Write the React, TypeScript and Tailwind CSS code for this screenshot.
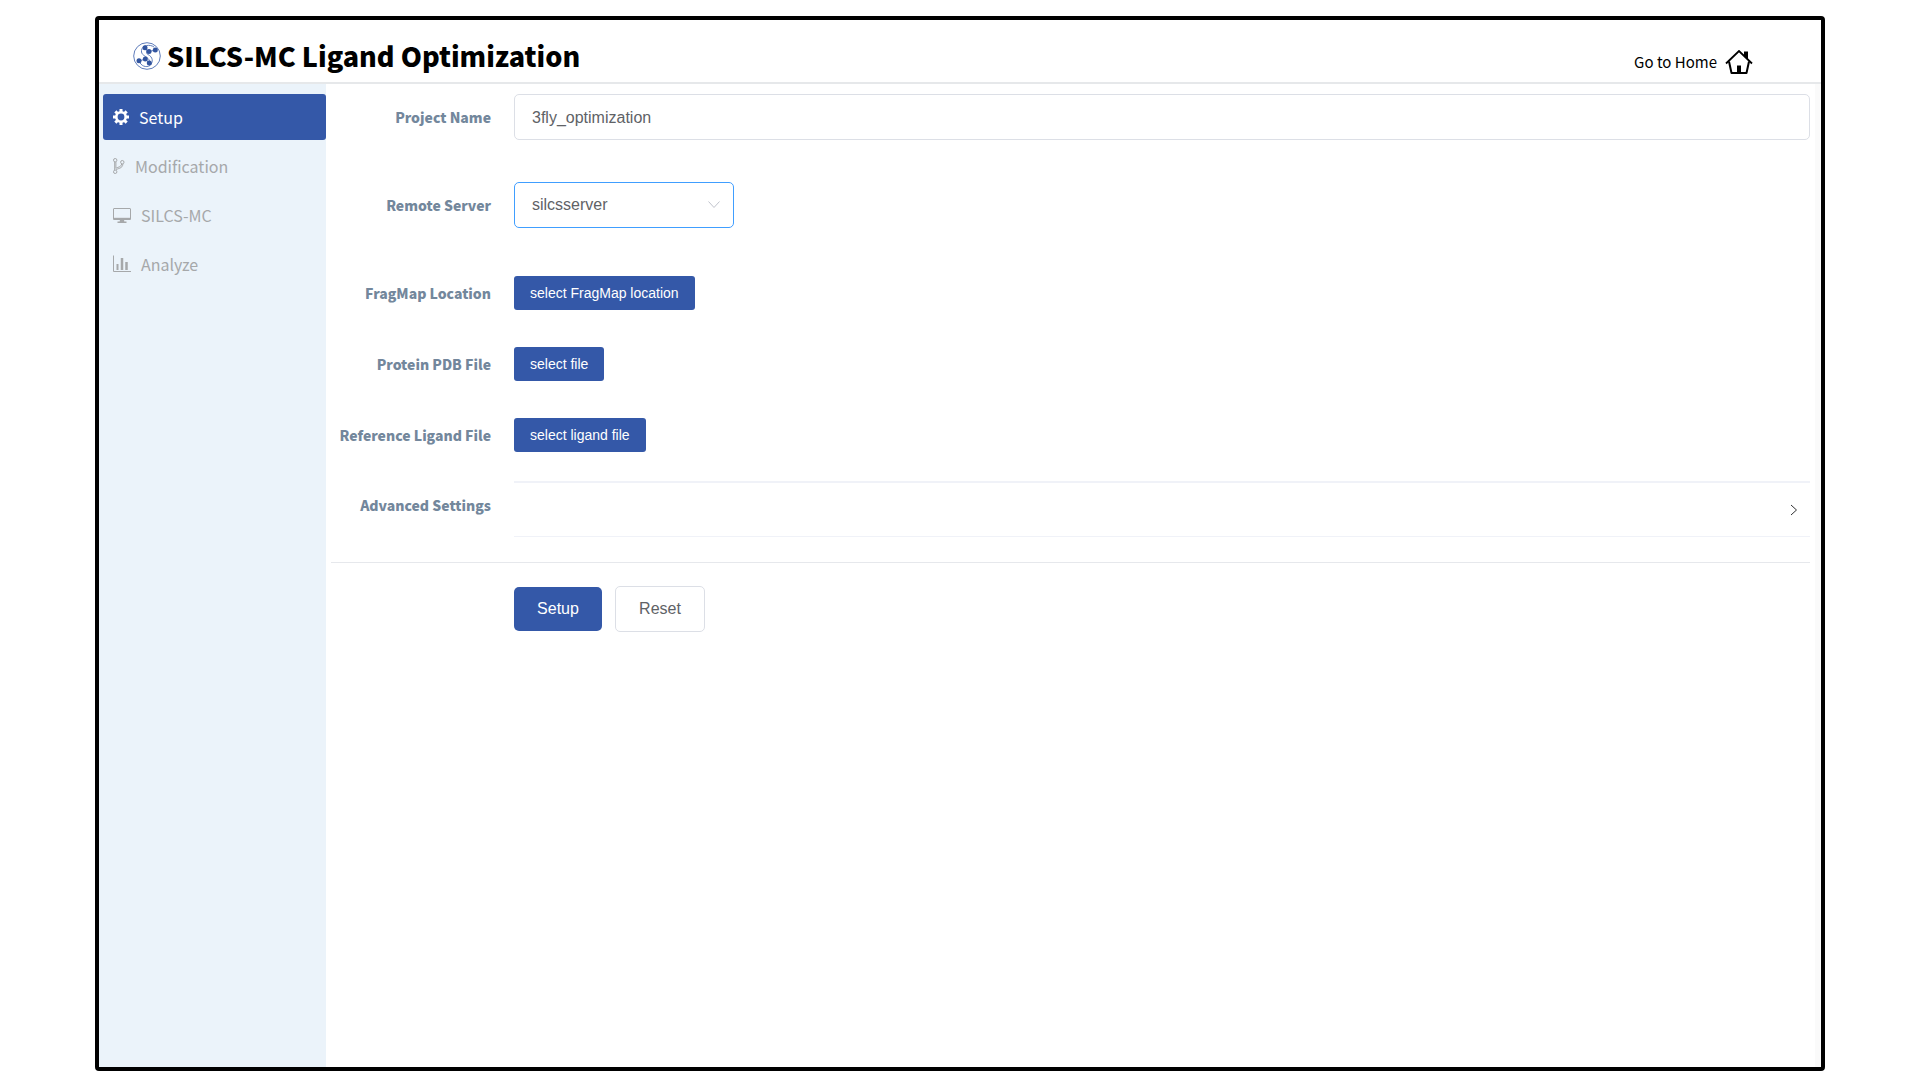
import React from 'react';

const navItems = [
  { name: 'Setup', icon: <CogIcon />, active: true },
  { name: 'Modification', icon: <BranchIcon />, active: false },
  { name: 'SILCS-MC', icon: <DesktopIcon />, active: false },
  { name: 'Analyze', icon: <ChartIcon />, active: false },
];

const fileRows = [
  { id: 'fragmap', label: 'FragMap Location', button: 'select FragMap location' },
  { id: 'protein', label: 'Protein PDB File', button: 'select file' },
  { id: 'ligand', label: 'Reference Ligand File', button: 'select ligand file' },
];

function Logo() {
  return (
    <svg className="w-7 h-7" viewBox="0 0 28 28" fill="none" stroke="#5f7dbb">
      <circle cx="14" cy="14" r="13.3" strokeWidth="1" />
      <path d="M21 5C17 2 9 3 8.500 8.500C8 13 12 13.500 14.500 16C17 18 16.500 20 16 21" strokeWidth="1" />
      <path d="M12 6C15 8 12 11 15 12.500C20 15 20.500 20 17 23.500C13 26 8 24 6 19" strokeWidth="1" />
      <path d="M12 6L16 9.500L22.500 8M6 19L12.500 17L16 21" strokeWidth="1" />
      <g fill="#31549f" stroke="none">
        <circle cx="12" cy="5.800" r="2.500" />
        <circle cx="16" cy="9.500" r="2.500" />
        <circle cx="22.300" cy="8" r="2.500" />
        <circle cx="6" cy="18.800" r="2.500" />
        <circle cx="12.300" cy="17" r="2.500" />
        <circle cx="16.300" cy="21" r="2.500" />
      </g>
    </svg>
  );
}

function HomeIcon() {
  return (
    <svg className="w-7 h-6" viewBox="0 0 28 24" fill="none" stroke="#000">
      <path d="M1 13.500L14 1L27 13.500" strokeWidth="1.800" />
      <path d="M4 11.500L6.500 23H21.500L24 11.500" strokeWidth="2" strokeLinejoin="round" />
      <path d="M19 1.500H23V10L19 6Z" fill="#000" stroke="none" />
      <path d="M12 15.500H16V23H12Z" fill="#000" stroke="none" />
    </svg>
  );
}

function CogIcon() {
  return (
    <svg className="w-4 h-4" viewBox="0 0 16 16" fill="none" stroke="currentColor">
      <circle cx="8" cy="8" r="4.700" strokeWidth="2.600" />
      <path
        d="M8 0V3M8 13V16M0 8H3M13 8H16M2.340 2.340L4.460 4.460M11.540 11.540L13.660 13.660M2.340 13.660L4.460 11.540M11.540 4.460L13.660 2.340"
        strokeWidth="3"
      />
    </svg>
  );
}

function BranchIcon() {
  return (
    <svg className="w-3 h-4" viewBox="0 0 12 16" fill="none" stroke="currentColor" strokeWidth="1">
      <circle cx="2.200" cy="2.200" r="1.700" />
      <circle cx="2.200" cy="13.800" r="1.700" />
      <circle cx="9.300" cy="4.200" r="1.700" />
      <path d="M1.700 4V12M2.900 4V10.500C4 9 8 9.500 8.700 6M9.900 6C9.500 11 4.500 10 3 12" />
    </svg>
  );
}

function DesktopIcon() {
  return (
    <svg className="w-[18px] h-4" viewBox="0 0 18 16" fill="none" stroke="currentColor">
      <rect x="0.500" y="1.500" width="17" height="11" rx="0.500" strokeWidth="1" />
      <path d="M0.500 11.800H17.500" strokeWidth="2" />
      <path d="M7 12.500H11L11.300 14.500H13.500V16H4.500V14.500H6.700Z" fill="currentColor" stroke="none" />
    </svg>
  );
}

function ChartIcon() {
  return (
    <svg className="w-[18px] h-[18px]" viewBox="0 0 18 18" fill="none" stroke="currentColor">
      <path d="M0.500 0.500V16.500H18" strokeWidth="1" />
      <path d="M4.500 9V15" strokeWidth="2" />
      <path d="M9 3V15" strokeWidth="2.500" />
      <path d="M13.500 7V15" strokeWidth="2.500" />
    </svg>
  );
}

export default function App() {
  return (
    <div className="min-h-screen flex bg-white px-[95px] pt-4 pb-[9px] font-['Noto_Sans_CJK_SC',sans-serif]">
      <div className="flex-1 flex flex-col border-4 border-black rounded-sm">
        <header className="flex items-end justify-between h-16 pl-[34px] pr-[68px] pb-2 border-b-2 border-[#e6e8ea]">
          <div className="flex items-center gap-[6px] pb-1">
            <Logo />
            <h1 className="text-[27px] leading-7 font-black text-black">SILCS-MC Ligand Optimization</h1>
          </div>
          <a href="#" className="flex items-center gap-2 text-[15px] leading-6 text-black">
            Go to Home
            <HomeIcon />
          </a>
        </header>

        <div className="flex-1 flex">
          <nav className="w-[227px] pl-1 pt-[10px] bg-[#ebf3fa] flex flex-col gap-[3px]">
            {navItems.map((item) => (
              <a
                key={item.name}
                href="#"
                className={
                  item.active
                    ? 'flex items-center gap-[10px] h-[46px] pl-[10px] rounded-[3px] bg-[#3458a8] text-white text-base leading-6'
                    : 'flex items-center gap-[10px] h-[46px] pl-[10px] text-[#a6a8aa] text-base leading-6'
                }
              >
                {item.icon}
                {item.name}
              </a>
            ))}
          </nav>

          <main className="flex-1 pl-[5px] pr-[5px] pt-[10px] border-r-[6px] border-[#fafafa]">
            <form onSubmit={(e) => e.preventDefault()}>
              <div className="flex items-center mb-[42px]">
                <label htmlFor="project" className="w-40 mr-[23px] text-right text-sm leading-6 font-black text-[#73879c]">
                  Project Name
                </label>
                <input
                  type="text"
                  id="project"
                  defaultValue="3fly_optimization"
                  className="flex-1 h-[46px] px-[17px] pt-[2px] border border-[#dcdfe6] rounded-[5px] font-['Liberation_Sans',sans-serif] text-base text-[#606266] focus:outline-none"
                />
              </div>

              <div className="flex items-center mb-12">
                <label htmlFor="server" className="w-40 mr-[23px] text-right text-sm leading-6 font-black text-[#73879c]">
                  Remote Server
                </label>
                <div className="relative w-[220px]">
                  <select
                    id="server"
                    className="w-full h-[46px] px-[17px] appearance-none border border-[#409eff] rounded-[5px] bg-white font-['Liberation_Sans',sans-serif] text-base text-[#606266] focus:outline-none"
                  >
                    <option>silcsserver</option>
                  </select>
                  <svg
                    className="absolute right-[14px] top-[19px] w-3 h-2 pointer-events-none"
                    viewBox="0 0 12 8"
                    fill="none"
                    stroke="#c0c4cc"
                  >
                    <path d="M0.500 0.500L6 6.500L11.500 0.500" />
                  </svg>
                </div>
              </div>

              <div className="flex flex-col gap-[37px] mb-[29px]">
                {fileRows.map((row) => (
                  <div key={row.id} className="flex items-center">
                    <label htmlFor={row.id} className="w-40 mr-[23px] text-right text-sm leading-6 font-black text-[#73879c]">
                      {row.label}
                    </label>
                    <button
                      type="button"
                      id={row.id}
                      className="h-[34px] px-4 rounded-[3px] bg-[#3458a8] font-['Liberation_Sans',sans-serif] text-sm text-white"
                    >
                      {row.button}
                    </button>
                  </div>
                ))}
              </div>

              <div className="flex mb-[25px]">
                <label htmlFor="advanced" className="w-40 mr-[23px] pt-3 text-right text-sm leading-6 font-black text-[#73879c]">
                  Advanced Settings
                </label>
                <button
                  type="button"
                  id="advanced"
                  className="flex-1 flex items-center justify-end h-14 pr-3 border-t-2 border-b border-[#f0f2f8]"
                >
                  <svg className="w-2 h-3" viewBox="0 0 8 12" fill="none" stroke="#303133">
                    <path d="M1 1L6.500 6L1 11" />
                  </svg>
                </button>
              </div>

              <div className="flex items-center gap-[13px] pl-[183px] pt-[23px] border-t border-[#e6e8ec]">
                <button
                  type="submit"
                  className="h-11 w-[88px] rounded-[5px] bg-[#3458a8] font-['Liberation_Sans',sans-serif] text-base text-white"
                >
                  Setup
                </button>
                <button
                  type="reset"
                  className="h-[46px] w-[90px] border border-[#dcdfe6] rounded-[5px] bg-white font-['Liberation_Sans',sans-serif] text-base text-[#606266]"
                >
                  Reset
                </button>
              </div>
            </form>
          </main>
        </div>
      </div>
    </div>
  );
}
